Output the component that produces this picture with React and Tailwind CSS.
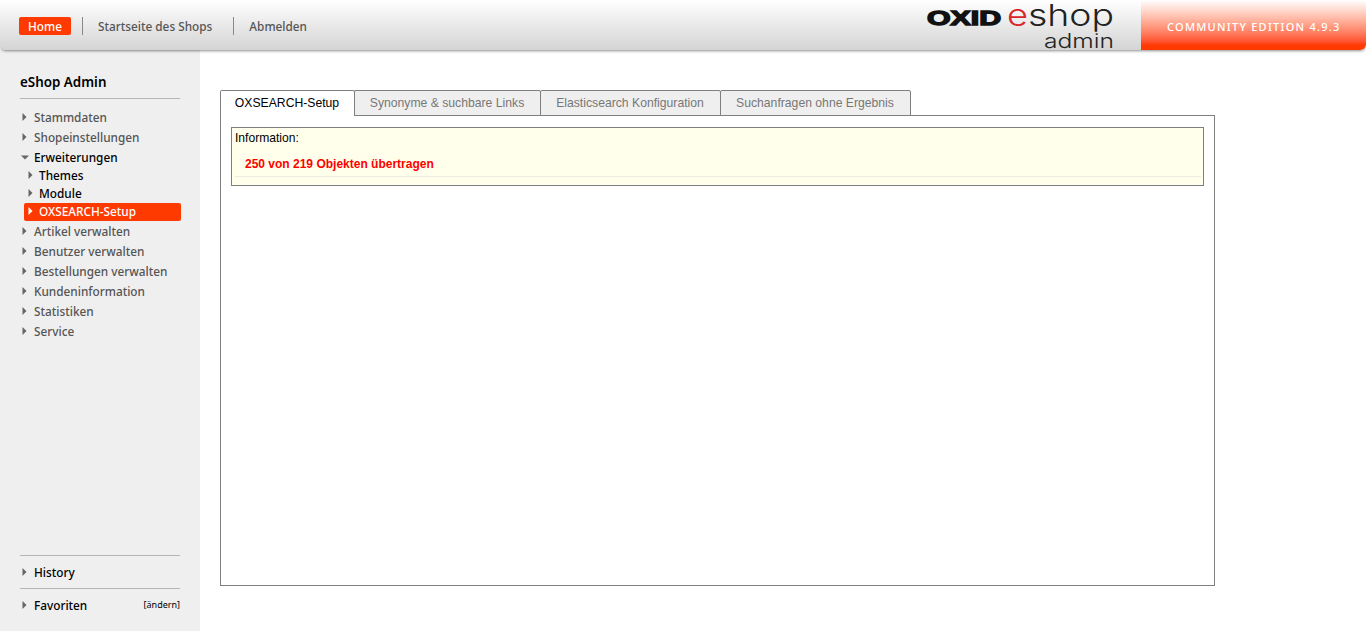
import React from "react";

const sans = "font-['Noto_Sans',sans-serif]";

const Arrow = ({ open, color = "#666" }) =>
  open ? (
    <svg width="9" height="7" viewBox="0 0 9 7" className="shrink-0 -mt-[2px]">
      <path d="M0 1.5h8L4 5.5z" fill={color} />
    </svg>
  ) : (
    <svg width="7" height="9" viewBox="0 0 7 9" className="shrink-0 -mt-[2px]">
      <path d="M1.5 0v8l4-4z" fill={color} />
    </svg>
  );

const MenuItem = ({ label, open, dark }) => (
  <div className="h-5 flex items-center pl-[21px]">
    <div className="w-[13px] flex items-center"><Arrow open={open} /></div>
    <span className={`text-[11.8px] font-medium ${dark ? "text-black" : "text-[#555]"}`}>{label}</span>
  </div>
);

const SubItem = ({ label, active }) =>
  active ? (
    <div className="h-[18px] ml-6 w-[157px] rounded-[2px] bg-[#ff3a00] flex items-center pl-[3px]">
      <div className="w-3 flex items-center"><Arrow color="#fff" /></div>
      <span className="text-[11.8px] font-medium text-white">{label}</span>
    </div>
  ) : (
    <div className="h-[18px] ml-6 flex items-center pl-[3px]">
      <div className="w-3 flex items-center"><Arrow /></div>
      <span className="text-[11.8px] font-medium text-black">{label}</span>
    </div>
  );

const Logo = () => (
  <svg width="200" height="50" viewBox="0 0 200 50" className="block overflow-visible">
    <text x="5" y="24.5" fontFamily="Liberation Sans" fontWeight="700" fontSize="20" textLength="74" lengthAdjust="spacingAndGlyphs" fill="#111" stroke="#111" strokeWidth="1.4">OXID</text>
    <text x="85" y="26" fontFamily="Inter" fontWeight="300" fontSize="30" textLength="21" lengthAdjust="spacingAndGlyphs" fill="#d8262c">e</text>
    <text x="106" y="26" fontFamily="Inter" fontWeight="300" fontSize="30" textLength="86" lengthAdjust="spacingAndGlyphs" fill="#222">shop</text>
    <text x="122" y="48" fontFamily="Inter" fontWeight="300" fontSize="20" textLength="70" lengthAdjust="spacingAndGlyphs" fill="#222">admin</text>
  </svg>
);

const Tab = ({ label, active, w }) => (
  <div
    className={`h-[26px] -ml-px first:ml-0 border border-[#7f7f7f] rounded-t-[2px] flex items-center justify-center pr-px text-[12.2px] ${
      active ? "bg-white border-b-0 z-10 text-black" : "bg-[#efefef] text-[#777]"
    } ${w}`}
  >
    {label}
  </div>
);

export default function App() {
  return (
    <div className="h-screen flex flex-col bg-white overflow-hidden">
      <header className={`relative z-10 h-[50px] shrink-0 flex items-stretch rounded-b-[6px] shadow-[0_1px_3px_rgba(0,0,0,0.45)] bg-gradient-to-b from-white to-[#d4d4d4] ${sans}`}>
        <div className="flex items-center pl-[19px] pt-[2px] flex-1">
          <span className="h-[18px] w-[52px] rounded-[2px] bg-[#ff3a00] flex items-center justify-center pt-[2px] text-[11.8px] font-medium text-white">Home</span>
          <span className="w-px h-[18px] bg-[#888] ml-[11px]" />
          <span className="ml-[15px] mt-[2px] text-[11.8px] font-medium text-[#555]">Startseite des Shops</span>
          <span className="w-px h-[18px] bg-[#888] ml-[21px]" />
          <span className="ml-[15px] mt-[2px] text-[11.8px] font-medium text-[#555]">Abmelden</span>
        </div>
        <div className="w-[200px] mr-[19px] shrink-0"><Logo /></div>
        <div className="w-[225px] shrink-0 rounded-br-[6px] bg-gradient-to-b from-white to-[#ff3a00] to-90% flex items-center pt-[4px] pl-[26px] whitespace-nowrap text-[11px] font-medium tracking-[1.26px] text-white">
          COMMUNITY EDITION 4.9.3
        </div>
      </header>

      <div className="flex flex-1 min-h-0">
        <aside className={`w-[200px] shrink-0 bg-[#efefef] flex flex-col ${sans}`}>
          <div className="mx-5 mt-[23px] h-[26px] border-b border-[#b5b5b5] text-[13.4px] font-semibold text-black leading-[19px]">eShop Admin</div>
          <div className="mt-[9px]">
            <MenuItem label="Stammdaten" />
            <MenuItem label="Shopeinstellungen" />
            <MenuItem label="Erweiterungen" open dark />
            <div className="-mt-px">
              <SubItem label="Themes" />
              <SubItem label="Module" />
              <SubItem label="OXSEARCH-Setup" active />
            </div>
            <div className="h-[1px]" />
            <MenuItem label="Artikel verwalten" />
            <MenuItem label="Benutzer verwalten" />
            <MenuItem label="Bestellungen verwalten" />
            <MenuItem label="Kundeninformation" />
            <MenuItem label="Statistiken" />
            <MenuItem label="Service" />
          </div>
          <div className="mt-auto mb-[10px]">
            <div className="mx-5 border-t border-[#b5b5b5] h-[33px] flex items-center pt-[2px]">
              <div className="w-[14px] pl-px flex items-center"><Arrow /></div>
              <span className="text-[11.8px] font-medium text-black">History</span>
            </div>
            <div className="mx-5 border-t border-[#b5b5b5] h-[33px] flex items-center pt-[2px]">
              <div className="w-[14px] pl-px flex items-center"><Arrow /></div>
              <span className="text-[11.8px] font-medium text-black">Favoriten</span>
              <span className="ml-auto text-[9px] text-black -mt-[2px]">[ändern]</span>
            </div>
          </div>
        </aside>

        <main className="flex-1 pl-5 pt-10 font-['Liberation_Sans',sans-serif]">
          <div className="flex items-start relative z-10">
            <Tab label="OXSEARCH-Setup" active w="w-[135px]" />
            <Tab label="Synonyme & suchbare Links" w="w-[187px]" />
            <Tab label="Elasticsearch Konfiguration" w="w-[181px]" />
            <Tab label="Suchanfragen ohne Ergebnis" w="w-[191px]" />
          </div>
          <div className="w-[995px] h-[471px] border border-[#7f7f7f] -mt-px pt-[11px] px-[10px]">
            <div className="h-[59px] border border-[#7f7f7f] bg-[#ffffeb] px-[3px] pt-[3px]">
              <div className="text-[12.1px] leading-[14px] text-black">Information:</div>
              <div className="mt-[3px] -mr-[1px] h-[29px] border-b border-[#ebebe0] pl-[10px] pt-[9px] text-xs leading-[14px] font-bold text-[#f00]">
                250 von 219 Objekten übertragen
              </div>
            </div>
          </div>
        </main>
      </div>
    </div>
  );
}
